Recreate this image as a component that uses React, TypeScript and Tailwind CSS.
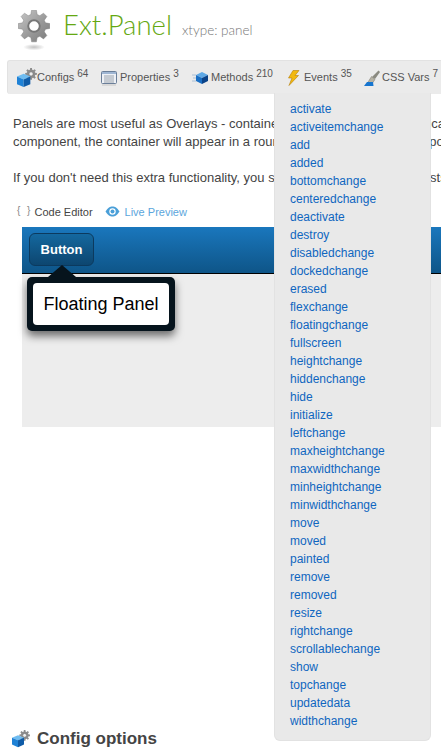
const EVENTS = [
  "activate", "activeitemchange", "add", "added", "bottomchange", "centeredchange", "deactivate", "destroy",
  "disabledchange", "dockedchange", "erased", "flexchange", "floatingchange", "fullscreen", "heightchange",
  "hiddenchange", "hide", "initialize", "leftchange", "maxheightchange", "maxwidthchange", "minheightchange",
  "minwidthchange", "move", "moved", "painted", "remove", "removed", "resize", "rightchange", "scrollablechange",
  "show", "topchange", "updatedata", "widthchange",
];

// 8 tooth gear outline, centred on 50,50
function gearPath(outer: number, inner: number) {
  const pts: string[] = [];
  for (let i = 0; i < 8; i++) {
    const a = (i * Math.PI) / 4;
    const p = (r: number, d: number) => {
      const t = a + d;
      return `${(50 + r * Math.sin(t)).toFixed(1)},${(50 - r * Math.cos(t)).toFixed(1)}`;
    };
    pts.push(p(inner, -0.27), p(outer, -0.15), p(outer, 0.15), p(inner, 0.27));
  }
  return "M" + pts.join("L") + "Z";
}

function BigGear() {
  return (
    <svg width={32} height={41} viewBox="0 0 100 128" className="block">
      <defs>
        <linearGradient id="gearFill" x1="0" y1="0" x2="1" y2="1">
          <stop offset="0" stopColor="#c9c9c9" />
          <stop offset="0.55" stopColor="#999" />
          <stop offset="1" stopColor="#7a7a7a" />
        </linearGradient>
        <radialGradient id="gearShadow">
          <stop offset="0" stopColor="#9a9a9a" stopOpacity="0.6" />
          <stop offset="1" stopColor="#9a9a9a" stopOpacity="0" />
        </radialGradient>
      </defs>
      <ellipse cx="50" cy="116" rx="34" ry="10" fill="url(#gearShadow)" />
      <path d={gearPath(50, 37)} fill="url(#gearFill)" stroke="#808080" strokeWidth="1.5" />
      <circle cx="50" cy="50" r="18" fill="#fff" stroke="#777" strokeWidth="6" />
    </svg>
  );
}

function ConfigIcon({ size = 20 }: { size?: number }) {
  return (
    <svg width={size} height={size} viewBox="0 0 21 21" className="block">
      <g transform="translate(8.5 0) scale(0.125)">
        <path d={gearPath(50, 36)} fill="#8c8c8c" />
        <circle cx="50" cy="50" r="18" fill="#f0f0f0" stroke="#777" strokeWidth="6" />
      </g>
      <g transform="translate(0 6)">
        <path d="M7 0 14 3 7 6 0 3Z" fill="#6fbcf0" />
        <path d="M0 3 7 6V14L0 11Z" fill="#1f82d6" />
        <path d="M14 3 7 6V14L14 11Z" fill="#0f5ca8" />
      </g>
    </svg>
  );
}

function PropertiesIcon() {
  return (
    <svg width={16} height={16} viewBox="0 0 16 16" className="block">
      <rect x="0.5" y="1.5" width="15" height="12" rx="1" fill="#eef1f6" stroke="#6b7f99" />
      <rect x="1" y="2" width="14" height="2" fill="#9fb6d3" />
      <path d="M3 6H13M3 8H13M3 10H13M3 12H13" stroke="#9aa3ad" strokeWidth="1" />
      <rect x="1" y="14" width="14" height="2" fill="#000" opacity="0.08" />
    </svg>
  );
}

function MethodsIcon() {
  return (
    <svg width={16} height={16} viewBox="0 0 16 16" className="block">
      <path d="M0 5H4M1 8H4M0 11H4" stroke="#a9bfd6" strokeWidth="1" />
      <path d="M10 2 16 5 10 8 4 5Z" fill="#5fa9e6" />
      <path d="M4 5 10 8V14L4 11Z" fill="#1a6fc4" />
      <path d="M16 5 10 8V14L16 11Z" fill="#0b4389" />
    </svg>
  );
}

function EventsIcon() {
  return (
    <svg width={14} height={16} viewBox="0 0 14 16" className="block">
      <path d="M7 0.5H13L9 5.5H12.5L3 15.5 6 8H2.5Z" fill="#f2b90f" stroke="#b57d0a" strokeWidth="0.6" />
    </svg>
  );
}

function CssVarsIcon() {
  return (
    <svg width={16} height={16} viewBox="0 0 16 16" className="block">
      <path d="M14.5 0.5 16 2 11 9 8 7Z" fill="#8a8a80" />
      <path d="M7.5 6.5 11 9.5 8.5 13H3.5Z" fill="#b5b2a4" stroke="#77756a" strokeWidth="0.5" />
      <path d="M0 16 3 12H9L9.5 16Z" fill="#1675cf" />
    </svg>
  );
}

function NavItem({ icon, label, count, className, labelClass }: { icon: React.ReactNode; label: string; count: string; className: string; labelClass: string }) {
  return (
    <div className={`flex shrink-0 items-center ${className}`}>
      {icon}
      <span className={`text-[11px] text-[#555] ${labelClass}`}>{label}</span>
      <sup className="top-[-4px] ml-[3px] text-[10px] leading-none text-[#555]">{count}</sup>
    </div>
  );
}

export default function App() {
  return (
    <div className="relative h-[752px] w-[441px] overflow-hidden bg-white font-['Liberation_Sans',Arial,sans-serif]">
      {/* header */}
      <div className="flex h-[60px] items-start pl-[18px] pt-[10px]">
        <BigGear />
        <span className="ml-[13px] mt-[-4px] font-['Lato',sans-serif] text-[27.5px] font-light leading-[38px] text-[#65a812]">Ext.Panel</span>
        <span className="ml-[10px] mt-[12px] font-['Lato',sans-serif] text-[13.5px] font-light leading-[16px] text-[#777]">xtype: panel</span>
      </div>

      {/* member nav */}
      <div className="ml-[7px] flex h-[34px] items-center whitespace-nowrap rounded-l-[3px] border-l border-t border-[#e2e2e2] bg-[#ebebeb] pl-[9px]">
        <NavItem icon={<ConfigIcon />} label="Configs" count="64" className="w-[84px]" labelClass="" />
        <NavItem icon={<PropertiesIcon />} label="Properties" count="3" className="w-[91px]" labelClass="ml-[3px]" />
        <NavItem icon={<MethodsIcon />} label="Methods" count="210" className="w-[94px]" labelClass="ml-[3px]" />
        <NavItem icon={<EventsIcon />} label="Events" count="35" className="w-[78px]" labelClass="ml-[4px]" />
        <NavItem icon={<CssVarsIcon />} label="CSS Vars" count="7" className="" labelClass="ml-[2px]" />
      </div>

      {/* description */}
      <div className="whitespace-nowrap pl-[13px] pt-[21px] text-[13px] leading-[18px] text-[#444]">
        <p>Panels are most useful as Overlays - containers that float over your application.</p>
        <p>component, the container will appear in a rounded black box which then positions itself</p>
        <p className="mt-[18px]">If you don't need this extra functionality, you should use Ext.Container. Lists and</p>
      </div>

      {/* example tabs */}
      <div className="mt-[16px] flex h-[18px] items-center pl-[17px] text-[11px]">
        <span className="mt-[-3px] text-[10px] tracking-[2px] text-[#888]">{"{ }"}</span>
        <span className="ml-[2px] text-[#444]">Code Editor</span>
        <svg width={15} height={11} viewBox="0 0 15 11" className="ml-[12px] mt-[-2px]">
          <path d="M0.5 5.5C3 1.5 5 0.5 7.5 0.5S12 1.5 14.5 5.5C12 9.5 10 10.5 7.5 10.5S3 9.5 0.5 5.5Z" fill="#4a9fd8" />
          <circle cx="7.5" cy="5.5" r="3.2" fill="#fff" />
          <circle cx="7.5" cy="5.5" r="2" fill="#4a9fd8" />
        </svg>
        <span className="ml-[5px] text-[#5ba6dc]">Live Preview</span>
      </div>

      {/* preview */}
      <div className="relative ml-[22px] mt-[6px] h-[200px] bg-[#ededed]">
        <div className="flex h-[47px] items-center border-b border-black bg-gradient-to-b from-[#1a77bd] to-[#0e5588] pl-[7px]">
          <div className="mb-[1px] flex h-[33px] w-[65px] items-center justify-center rounded-[6px] border border-[#0c3a5e] bg-gradient-to-b from-[#14689f] to-[#0d4670] text-[13px] font-bold text-white">
            Button
          </div>
        </div>
        <div className="absolute left-[5px] top-[50px] rounded-[5px] bg-[#06141d] p-[6px] shadow-[0_5px_9px_rgba(0,0,0,0.55)]">
          <div className="absolute left-[21px] top-[-12px] h-0 w-0 border-x-[14px] border-b-[12px] border-x-transparent border-b-[#06141d]" />
          <div className="flex h-[42px] w-[136px] items-center justify-center rounded-[4px] bg-white text-[18px] text-black">Floating Panel</div>
        </div>
      </div>

      {/* config heading */}
      <div className="mt-[302px] flex items-center pl-[12px]">
        <ConfigIcon size={18} />
        <h2 className="ml-[7px] text-[17px] font-bold leading-[20px] text-[#444]">Config options</h2>
      </div>

      {/* events menu */}
      <div className="absolute left-[274px] top-[93px] h-[648px] w-[157px] rounded-b-[6px] border-x border-b border-[#e2e2e2] bg-[#e9e9e9] pl-[15px] pt-[7px]">
        {EVENTS.map((name) => (
          <div key={name} className="h-[18px] text-[12px] leading-[18px] text-[#0f66c0]">{name}</div>
        ))}
      </div>
    </div>
  );
}
